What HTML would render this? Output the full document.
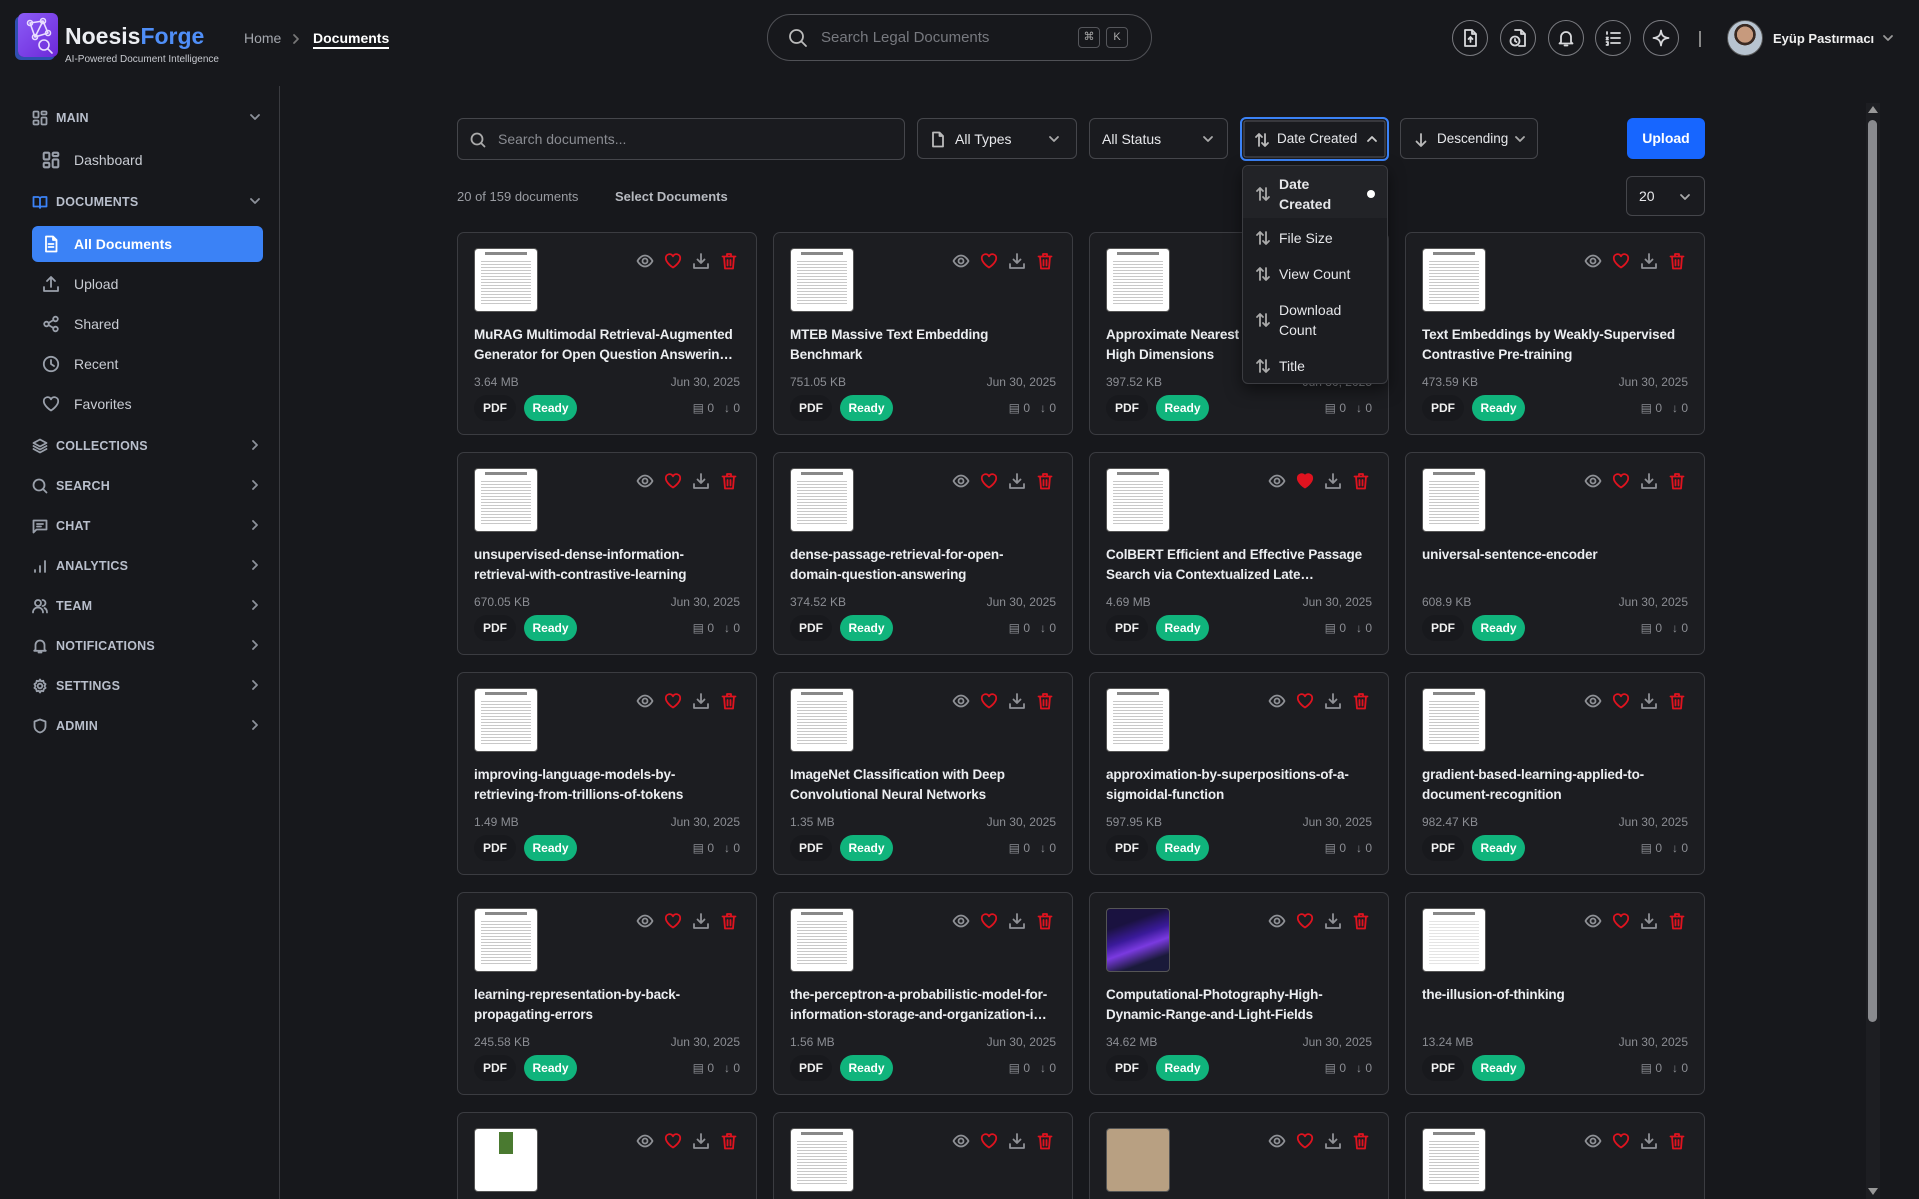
<!DOCTYPE html>
<html><head><meta charset="utf-8">
<style>
*{box-sizing:border-box;margin:0;padding:0}
html,body{width:1919px;height:1199px;overflow:hidden;background:#17181c}
body{font-family:"Liberation Sans",sans-serif;color:#e6e7ea}
#root{position:relative;width:1919px;height:1199px;overflow:hidden}
.a{position:absolute;white-space:nowrap}
svg{display:block}
.ic{fill:none;stroke:currentColor;stroke-width:1.8;stroke-linecap:round;stroke-linejoin:round}
.sec{position:absolute;left:32px;width:232px;height:24px;font-size:12.5px;font-weight:bold;color:#b9bfcc;letter-spacing:.2px;white-space:nowrap}
.sec svg{position:absolute;left:0;top:4px;color:#9aa0ab}
.sec span{position:absolute;left:24px;top:5px}
.sec .ch{position:absolute;left:216px;top:4px;color:#8d919a}
.sub{position:absolute;left:42px;width:200px;height:24px;font-size:14px;color:#c9ccd3;white-space:nowrap}
.sub svg{position:absolute;left:0;top:3px;color:#9aa0ab}
.sub span{position:absolute;left:32px;top:4px}
.card{position:absolute;width:300px;height:203px;background:#1c1d21;border:1px solid #3b3c41;border-radius:7px}
.card.last{height:87px;border-bottom:none;border-radius:7px 7px 0 0}
.th{position:absolute;left:16px;top:15px;width:64px;height:64px;border-radius:4px;border:1px solid #555;background:#fff;overflow:hidden}
.th i{position:absolute;left:6px;right:6px;top:10px;bottom:6px;background:repeating-linear-gradient(#fff 0 2px,#bbb 2px 3px);opacity:.8}
.th b{position:absolute;left:10px;right:10px;top:3px;height:3px;background:#888}
.acts{position:absolute;left:178px;top:19px;width:110px;height:18px}
.acts svg{position:absolute;top:0}
.tt{position:absolute;left:16px;top:92px;width:260px;font-size:13.5px;letter-spacing:-.15px;font-weight:bold;line-height:20px;color:#eceef1;overflow:hidden;display:-webkit-box;-webkit-line-clamp:2;-webkit-box-orient:vertical}
.meta{position:absolute;left:16px;right:16px;top:142px;font-size:12px;color:#8b8d93}
.meta .r{position:absolute;right:0;top:0}
.pdf{position:absolute;left:16px;top:162px;width:42px;height:26px;border-radius:13px;background:#18191d;font-size:12px;font-weight:bold;text-align:center;line-height:26px;color:#f0f0f0}
.rdy{position:absolute;left:66px;top:162px;width:53px;height:26px;border-radius:13px;background:#10b47c;font-size:12px;font-weight:bold;text-align:center;line-height:26px;color:#fff}
.cnt{position:absolute;right:16px;top:168px;font-size:12px;color:#8b8d93;white-space:nowrap}
.box{position:absolute;border:1px solid #45464b;border-radius:6px;background:#1a1b1f;font-size:14px;color:#e8e9ec;white-space:nowrap}
.mi{position:absolute;left:12px;width:125px;font-size:14px;color:#e6e7ea;white-space:nowrap}
.mi svg{position:absolute;left:0;color:#aaa}
.mi span{position:absolute;left:24px;line-height:20px}
.hb{position:absolute;top:20px;width:36px;height:36px;border:1.5px solid #7a7b80;border-radius:50%;color:#d8d9dc}
.hb svg{position:absolute;left:8px;top:8px}
</style></head><body><div id="root">

<div class="a" style="left:18px;top:13px;width:40px;height:44px;border-radius:6px;background:linear-gradient(135deg,#8b5cf6,#6d28d9);box-shadow:-3px 3px 0 #2f4fb0">
<svg width="40" height="44" viewBox="0 0 40 44" class="ic" style="color:#e9ddff;stroke-width:1.6"><circle cx="12" cy="10" r="2.5"/><circle cx="25" cy="8" r="2.5"/><circle cx="30" cy="20" r="2.5"/><circle cx="17" cy="24" r="2.5"/><path d="M12 10 25 8 30 20 17 24 12 10M17 24 25 8"/><circle cx="26" cy="32" r="5"/><path d="M30 36 34 40"/></svg></div>
<div class="a" style="left:65px;top:23px;font-size:23px;font-weight:bold;color:#eceef2">Noesis<span style="color:#4f8ef7">Forge</span></div>
<div class="a" style="left:65px;top:54px;font-size:10px;color:#c8cad0">AI-Powered Document Intelligence</div>
<div class="a" style="left:244px;top:30px;font-size:14px;color:#a3a6ad">Home</div>
<svg class="a ic" style="left:291px;top:33px;color:#777" width="10" height="12" viewBox="0 0 10 12"><path d="M3 2l4 4-4 4"/></svg>
<div class="a" style="left:313px;top:30px;font-size:14px;font-weight:bold;color:#fff;border-bottom:2px solid #fff;padding-bottom:1px">Documents</div>

<div class="a" style="left:767px;top:14px;width:385px;height:47px;border:1.5px solid #505156;border-radius:24px">
<svg class="a ic" style="left:20px;top:13px;color:#bbb" width="20" height="20" viewBox="0 0 20 20"><circle cx="8.5" cy="8.5" r="6.5"/><path d="M13.5 13.5 18 18"/></svg>
<div class="a" style="left:53px;top:14px;font-size:15px;color:#77797f">Search Legal Documents</div>
<div class="a" style="left:310px;top:12px;width:22px;height:21px;border:1px solid #55565b;border-radius:4px;font-size:11px;color:#aaa;text-align:center;line-height:19px">⌘</div>
<div class="a" style="left:338px;top:12px;width:22px;height:21px;border:1px solid #55565b;border-radius:4px;font-size:11px;color:#aaa;text-align:center;line-height:19px">K</div>
</div>

<div class="hb" style="left:1452px"><svg class="ic" width="18" height="18" viewBox="0 0 18 18"><path d="M4 1h7l4 4v12H4zM11 1v4h4M9.5 13V8M7.5 10l2-2 2 2"/></svg></div>
<div class="hb" style="left:1500px"><svg class="ic" width="18" height="18" viewBox="0 0 18 18"><path d="M6 1h6l4 4v12H10M12 1v4h4"/><circle cx="6" cy="12" r="4.5"/><path d="M6 10v2l1.5 1"/></svg></div>
<div class="hb" style="left:1548px"><svg class="ic" width="18" height="18" viewBox="0 0 18 18"><path d="M4 13V8a5 5 0 0 1 10 0v5l1.5 1.5h-13zM7.5 16.5h3"/></svg></div>
<div class="hb" style="left:1595px"><svg class="ic" width="18" height="18" viewBox="0 0 18 18"><path d="M7 4h9M7 9h9M7 14h9M3 3v2M2.5 8.5h1.5l-1.5 2h1.5M2.5 13h1.5v3h-1.5"/></svg></div>
<div class="hb" style="left:1643px"><svg class="ic" width="18" height="18" viewBox="0 0 18 18"><path d="M9 1.5C9.6 6.5 11.5 8.4 16.5 9 11.5 9.6 9.6 11.5 9 16.5 8.4 11.5 6.5 9.6 1.5 9 6.5 8.4 8.4 6.5 9 1.5z"/></svg></div>
<div class="a" style="left:1699px;top:31px;width:2px;height:16px;background:#888"></div>
<div class="a" style="left:1727px;top:20px;width:36px;height:36px;border-radius:50%;background:radial-gradient(circle at 50% 40%,#c79a7d 0 30%,#3a2a22 31% 40%,#b8c4d0 41%);border:1px solid #555"></div>
<div class="a" style="left:1773px;top:31px;font-size:13px;font-weight:bold;color:#f0f0f0">Eyüp Pastırmacı</div>
<svg class="a ic" style="left:1882px;top:33px;color:#999" width="12" height="10" viewBox="0 0 12 10"><path d="M2 3l4 4 4-4"/></svg>

<div class="a" style="left:279px;top:86px;width:1px;height:1113px;background:#3a3b40"></div>
<div class="sec" style="top:106px"><svg class="ic" width="16" height="16" viewBox="0 0 16 16"><rect x="1.5" y="1.5" width="5" height="6" rx="1"/><rect x="9.5" y="1.5" width="5" height="3" rx="1"/><rect x="9.5" y="7.5" width="5" height="7" rx="1"/><rect x="1.5" y="10.5" width="5" height="4" rx="1"/></svg><span>MAIN</span><svg class="ch ic" width="14" height="14" viewBox="0 0 14 14"><path d="M3 5l4 4 4-4"/></svg></div>
<div class="sub" style="top:148px"><svg class="ic" width="18" height="18" viewBox="0 0 16 16"><rect x="1.5" y="1.5" width="5" height="6" rx="1"/><rect x="9.5" y="1.5" width="5" height="3" rx="1"/><rect x="9.5" y="7.5" width="5" height="7" rx="1"/><rect x="1.5" y="10.5" width="5" height="4" rx="1"/></svg><span>Dashboard</span></div>
<div class="sec" style="top:190px"><svg class="ic" width="16" height="16" viewBox="0 0 16 16" style="color:#3b82f6"><path d="M1.5 3h4.5a2 2 0 0 1 2 2v9a1.5 1.5 0 0 0-1.5-1.5h-5zM14.5 3H10a2 2 0 0 0-2 2v9a1.5 1.5 0 0 1 1.5-1.5h5z"/></svg><span>DOCUMENTS</span><svg class="ch ic" width="14" height="14" viewBox="0 0 14 14"><path d="M3 5l4 4 4-4"/></svg></div>
<div class="a" style="left:32px;top:226px;width:231px;height:36px;border-radius:6px;background:#3b82f6"></div>
<div class="sub" style="top:232px;color:#fff;font-weight:bold"><svg class="ic" style="color:#fff" width="18" height="18" viewBox="0 0 18 18"><path d="M4 1.5h7l3.5 3.5v11.5H4zM11 1.5V5h3.5M6.5 9h5M6.5 12h5"/></svg><span>All Documents</span></div>
<div class="sub" style="top:272px"><svg class="ic" width="18" height="18" viewBox="0 0 18 18"><path d="M9 12V2M5 6l4-4 4 4M2 12v4h14v-4"/></svg><span>Upload</span></div>
<div class="sub" style="top:312px"><svg class="ic" width="18" height="18" viewBox="0 0 18 18"><circle cx="13.5" cy="4" r="2.3"/><circle cx="4.5" cy="9" r="2.3"/><circle cx="13.5" cy="14" r="2.3"/><path d="M6.5 8 11.5 5M6.5 10l5 3"/></svg><span>Shared</span></div>
<div class="sub" style="top:352px"><svg class="ic" width="18" height="18" viewBox="0 0 18 18"><circle cx="9" cy="9" r="7.2"/><path d="M9 5v4l3 2"/></svg><span>Recent</span></div>
<div class="sub" style="top:392px"><svg class="ic" width="18" height="18" viewBox="0 0 18 18"><path d="M9 15.5S1.8 11 1.8 6.3A3.8 3.8 0 0 1 9 4.3a3.8 3.8 0 0 1 7.2 2C16.2 11 9 15.5 9 15.5z"/></svg><span>Favorites</span></div>

<div class="sec" style="top:434px"><svg class="ic" width="16" height="16" viewBox="0 0 16 16"><path d="M8 1.5 14.5 5 8 8.5 1.5 5zM1.5 8 8 11.5 14.5 8M1.5 11 8 14.5 14.5 11"/></svg><span>COLLECTIONS</span><svg class="ch ic" width="14" height="14" viewBox="0 0 14 14"><path d="M5 3l4 4-4 4"/></svg></div>
<div class="sec" style="top:474px"><svg class="ic" width="16" height="16" viewBox="0 0 16 16"><circle cx="7" cy="7" r="5.5"/><path d="M11 11l3.5 3.5"/></svg><span>SEARCH</span><svg class="ch ic" width="14" height="14" viewBox="0 0 14 14"><path d="M5 3l4 4-4 4"/></svg></div>
<div class="sec" style="top:514px"><svg class="ic" width="16" height="16" viewBox="0 0 16 16"><path d="M1.5 14.5V2.5h13v9h-10zM5 6h6M5 8.5h4"/></svg><span>CHAT</span><svg class="ch ic" width="14" height="14" viewBox="0 0 14 14"><path d="M5 3l4 4-4 4"/></svg></div>
<div class="sec" style="top:554px"><svg class="ic" width="16" height="16" viewBox="0 0 16 16"><path d="M3 14v-2M8 14V8M13 14V3"/></svg><span>ANALYTICS</span><svg class="ch ic" width="14" height="14" viewBox="0 0 14 14"><path d="M5 3l4 4-4 4"/></svg></div>
<div class="sec" style="top:594px"><svg class="ic" width="16" height="16" viewBox="0 0 16 16"><circle cx="6" cy="5" r="3"/><path d="M1 14.5c0-3 2.2-5 5-5s5 2 5 5M10.5 2a3 3 0 0 1 0 6M12.5 10c1.5.7 2.5 2.3 2.5 4.5"/></svg><span>TEAM</span><svg class="ch ic" width="14" height="14" viewBox="0 0 14 14"><path d="M5 3l4 4-4 4"/></svg></div>
<div class="sec" style="top:634px"><svg class="ic" width="16" height="16" viewBox="0 0 16 16"><path d="M3.5 11.5V7a4.5 4.5 0 0 1 9 0v4.5l1.3 1.3H2.2zM6.5 14.5h3"/></svg><span>NOTIFICATIONS</span><svg class="ch ic" width="14" height="14" viewBox="0 0 14 14"><path d="M5 3l4 4-4 4"/></svg></div>
<div class="sec" style="top:674px"><svg class="ic" width="16" height="16" viewBox="0 0 16 16"><circle cx="8" cy="8" r="2.3"/><path d="M8 1.5l1.2 1.8 2.1-.5.5 2.1 1.8 1.2-1.1 1.9 1.1 1.9-1.8 1.2-.5 2.1-2.1-.5L8 14.5l-1.2-1.8-2.1.5-.5-2.1-1.8-1.2L3.5 8 2.4 6.1l1.8-1.2.5-2.1 2.1.5z"/></svg><span>SETTINGS</span><svg class="ch ic" width="14" height="14" viewBox="0 0 14 14"><path d="M5 3l4 4-4 4"/></svg></div>
<div class="sec" style="top:714px"><svg class="ic" width="16" height="16" viewBox="0 0 16 16"><path d="M8 1.5l5.5 2v4.5c0 3.5-2.5 5.7-5.5 6.5C5 13.7 2.5 11.5 2.5 8V3.5z"/></svg><span>ADMIN</span><svg class="ch ic" width="14" height="14" viewBox="0 0 14 14"><path d="M5 3l4 4-4 4"/></svg></div>

<div class="box" style="left:457px;top:118px;width:448px;height:42px;background:#1a1b1f">
<svg class="a ic" style="left:12px;top:13px;color:#aaa" width="16" height="16" viewBox="0 0 16 16"><circle cx="7" cy="7" r="5.5"/><path d="M11 11l3.5 3.5"/></svg>
<div class="a" style="left:40px;top:12px;color:#8a8c92">Search documents...</div></div>
<div class="box" style="left:917px;top:118px;width:160px;height:41px">
<svg class="a ic" style="left:12px;top:12px;color:#bbb" width="16" height="17" viewBox="0 0 16 17"><path d="M3 1.5h6.5L13 5v10.5H3zM9.5 1.5V5H13"/></svg>
<div class="a" style="left:37px;top:12px">All Types</div>
<svg class="a ic" style="left:130px;top:14px;color:#aaa" width="12" height="12" viewBox="0 0 12 12"><path d="M2 4l4 4 4-4"/></svg></div>
<div class="box" style="left:1089px;top:118px;width:139px;height:41px">
<div class="a" style="left:12px;top:12px">All Status</div>
<svg class="a ic" style="left:112px;top:14px;color:#aaa" width="12" height="12" viewBox="0 0 12 12"><path d="M2 4l4 4 4-4"/></svg></div>
<div class="box" style="left:1240px;top:117px;width:149px;height:44px;border:2px solid #3b82f6;box-shadow:inset 0 0 0 1.5px #1a1b1f,inset 0 0 0 2.5px #55565b">
<svg class="a ic" style="left:12px;top:13px;color:#bbb" width="16" height="16" viewBox="0 0 16 16"><path d="M5 14V2M2 5l3-3 3 3M11 2v12M8 11l3 3 3-3"/></svg>
<div class="a" style="left:35px;top:12px;font-size:13.5px">Date Created</div>
<svg class="a ic" style="left:124px;top:14px;color:#ccc" width="12" height="12" viewBox="0 0 12 12"><path d="M2 8l4-4 4 4"/></svg></div>
<div class="box" style="left:1400px;top:118px;width:138px;height:41px">
<svg class="a ic" style="left:12px;top:13px;color:#bbb" width="16" height="16" viewBox="0 0 16 16"><path d="M8 2v12M3.5 9.5 8 14l4.5-4.5"/></svg>
<div class="a" style="left:36px;top:12px;font-size:13.5px">Descending</div>
<svg class="a ic" style="left:113px;top:14px;color:#aaa" width="12" height="12" viewBox="0 0 12 12"><path d="M2 4l4 4 4-4"/></svg></div>
<div class="a" style="left:1627px;top:118px;width:78px;height:41px;border-radius:6px;background:#1766ff;color:#fff;font-weight:bold;font-size:14px;text-align:center;line-height:41px">Upload</div>

<div class="a" style="left:457px;top:189px;font-size:13px;color:#9a9ca2">20 of 159 documents</div>
<div class="a" style="left:615px;top:189px;font-size:13px;font-weight:bold;color:#b7bac0">Select Documents</div>
<div class="box" style="left:1626px;top:176px;width:79px;height:40px">
<div class="a" style="left:12px;top:11px">20</div>
<svg class="a ic" style="left:52px;top:14px;color:#aaa" width="12" height="12" viewBox="0 0 12 12"><path d="M2 4l4 4 4-4"/></svg></div>

<div class="a" style="left:1866px;top:103px;width:14px;height:1096px;background:#1d1e22"></div>
<div class="a" style="left:1868px;top:120px;width:9px;height:902px;border-radius:5px;background:#8a8b8f"></div>
<div class="a" style="left:1868px;top:106px;width:0;height:0;border-left:5px solid transparent;border-right:5px solid transparent;border-bottom:7px solid #999"></div>
<div class="a" style="left:1868px;top:1188px;width:0;height:0;border-left:5px solid transparent;border-right:5px solid transparent;border-top:7px solid #999"></div>

<div class="card" style="left:457px;top:232px"><div class="th"><b></b><i></i></div><div class="acts"></div><div class="tt">MuRAG Multimodal Retrieval-Augmented Generator for Open Question Answering over Images and Text</div><div class="meta">3.64 MB<span class="r">Jun 30, 2025</span></div><div class="pdf">PDF</div><div class="rdy">Ready</div><div class="cnt">▤ 0 &nbsp; ↓ 0</div></div>
<div class="card" style="left:773px;top:232px"><div class="th"><b></b><i></i></div><div class="acts"></div><div class="tt">MTEB Massive Text Embedding Benchmark</div><div class="meta">751.05 KB<span class="r">Jun 30, 2025</span></div><div class="pdf">PDF</div><div class="rdy">Ready</div><div class="cnt">▤ 0 &nbsp; ↓ 0</div></div>
<div class="card" style="left:1089px;top:232px"><div class="th"><b></b><i></i></div><div class="acts"></div><div class="tt">Approximate Nearest Neighbor Search in High Dimensions</div><div class="meta">397.52 KB<span class="r">Jun 30, 2025</span></div><div class="pdf">PDF</div><div class="rdy">Ready</div><div class="cnt">▤ 0 &nbsp; ↓ 0</div></div>
<div class="card" style="left:1405px;top:232px"><div class="th"><b></b><i></i></div><div class="acts"></div><div class="tt">Text Embeddings by Weakly-Supervised Contrastive Pre-training</div><div class="meta">473.59 KB<span class="r">Jun 30, 2025</span></div><div class="pdf">PDF</div><div class="rdy">Ready</div><div class="cnt">▤ 0 &nbsp; ↓ 0</div></div>

<div class="card" style="left:457px;top:452px"><div class="th"><b></b><i></i></div><div class="acts"></div><div class="tt">unsupervised-dense-information-retrieval-with-contrastive-learning</div><div class="meta">670.05 KB<span class="r">Jun 30, 2025</span></div><div class="pdf">PDF</div><div class="rdy">Ready</div><div class="cnt">▤ 0 &nbsp; ↓ 0</div></div>
<div class="card" style="left:773px;top:452px"><div class="th"><b></b><i></i></div><div class="acts"></div><div class="tt">dense-passage-retrieval-for-open-domain-question-answering</div><div class="meta">374.52 KB<span class="r">Jun 30, 2025</span></div><div class="pdf">PDF</div><div class="rdy">Ready</div><div class="cnt">▤ 0 &nbsp; ↓ 0</div></div>
<div class="card" style="left:1089px;top:452px"><div class="th"><b></b><i></i></div><div class="acts fav"></div><div class="tt">ColBERT Efficient and Effective Passage Search via Contextualized Late Interaction over BERT</div><div class="meta">4.69 MB<span class="r">Jun 30, 2025</span></div><div class="pdf">PDF</div><div class="rdy">Ready</div><div class="cnt">▤ 0 &nbsp; ↓ 0</div></div>
<div class="card" style="left:1405px;top:452px"><div class="th"><b></b><i></i></div><div class="acts"></div><div class="tt">universal-sentence-encoder</div><div class="meta">608.9 KB<span class="r">Jun 30, 2025</span></div><div class="pdf">PDF</div><div class="rdy">Ready</div><div class="cnt">▤ 0 &nbsp; ↓ 0</div></div>

<div class="card" style="left:457px;top:672px"><div class="th"><b></b><i></i></div><div class="acts"></div><div class="tt">improving-language-models-by-retrieving-from-trillions-of-tokens</div><div class="meta">1.49 MB<span class="r">Jun 30, 2025</span></div><div class="pdf">PDF</div><div class="rdy">Ready</div><div class="cnt">▤ 0 &nbsp; ↓ 0</div></div>
<div class="card" style="left:773px;top:672px"><div class="th"><b></b><i></i></div><div class="acts"></div><div class="tt">ImageNet Classification with Deep Convolutional Neural Networks</div><div class="meta">1.35 MB<span class="r">Jun 30, 2025</span></div><div class="pdf">PDF</div><div class="rdy">Ready</div><div class="cnt">▤ 0 &nbsp; ↓ 0</div></div>
<div class="card" style="left:1089px;top:672px"><div class="th"><b></b><i></i></div><div class="acts"></div><div class="tt">approximation-by-superpositions-of-a-sigmoidal-function</div><div class="meta">597.95 KB<span class="r">Jun 30, 2025</span></div><div class="pdf">PDF</div><div class="rdy">Ready</div><div class="cnt">▤ 0 &nbsp; ↓ 0</div></div>
<div class="card" style="left:1405px;top:672px"><div class="th"><b></b><i></i></div><div class="acts"></div><div class="tt">gradient-based-learning-applied-to-document-recognition</div><div class="meta">982.47 KB<span class="r">Jun 30, 2025</span></div><div class="pdf">PDF</div><div class="rdy">Ready</div><div class="cnt">▤ 0 &nbsp; ↓ 0</div></div>

<div class="card" style="left:457px;top:892px"><div class="th"><b></b><i></i></div><div class="acts"></div><div class="tt">learning-representation-by-back-propagating-errors</div><div class="meta">245.58 KB<span class="r">Jun 30, 2025</span></div><div class="pdf">PDF</div><div class="rdy">Ready</div><div class="cnt">▤ 0 &nbsp; ↓ 0</div></div>
<div class="card" style="left:773px;top:892px"><div class="th"><b></b><i></i></div><div class="acts"></div><div class="tt">the-perceptron-a-probabilistic-model-for-information-storage-and-organization-in-the-brain</div><div class="meta">1.56 MB<span class="r">Jun 30, 2025</span></div><div class="pdf">PDF</div><div class="rdy">Ready</div><div class="cnt">▤ 0 &nbsp; ↓ 0</div></div>
<div class="card" style="left:1089px;top:892px"><div class="th" style="background:linear-gradient(160deg,#1a1240 0 25%,#3a1a9a 45%,#7a3ae0 60%,#1a1a3a 80%)"></div><div class="acts"></div><div class="tt">Computational-Photography-High-Dynamic-Range-and-Light-Fields</div><div class="meta">34.62 MB<span class="r">Jun 30, 2025</span></div><div class="pdf">PDF</div><div class="rdy">Ready</div><div class="cnt">▤ 0 &nbsp; ↓ 0</div></div>
<div class="card" style="left:1405px;top:892px"><div class="th"><b></b><i style="opacity:.4"></i></div><div class="acts"></div><div class="tt">the-illusion-of-thinking</div><div class="meta">13.24 MB<span class="r">Jun 30, 2025</span></div><div class="pdf">PDF</div><div class="rdy">Ready</div><div class="cnt">▤ 0 &nbsp; ↓ 0</div></div>

<div class="card last" style="left:457px;top:1112px"><div class="th"><b style="background:#4a7a30;left:24px;right:24px;height:22px"></b></div><div class="acts"></div></div>
<div class="card last" style="left:773px;top:1112px"><div class="th"><b></b><i></i></div><div class="acts"></div></div>
<div class="card last" style="left:1089px;top:1112px"><div class="th" style="background:#b8a082"></div><div class="acts"></div></div>
<div class="card last" style="left:1405px;top:1112px"><div class="th"><b></b><i></i></div><div class="acts"></div></div>

<div class="a" style="left:1242px;top:165px;width:146px;height:219px;background:#1c1d21;border:1px solid #3b3c41;border-radius:6px;box-shadow:0 6px 16px rgba(0,0,0,.5)">
<div class="a" style="left:0;top:0;width:144px;height:52px;background:#222327;border-radius:6px 6px 0 0"></div>
<div class="mi" style="top:8px;height:40px;font-weight:bold"><svg class="ic" style="top:12px" width="16" height="16" viewBox="0 0 16 16"><path d="M5 14V2M2 5l3-3 3 3M11 2v12M8 11l3 3 3-3"/></svg><span style="top:0">Date<br>Created</span><div class="a" style="left:112px;top:16px;width:8px;height:8px;border-radius:50%;background:#fff"></div></div>
<div class="mi" style="top:62px"><svg class="ic" style="top:2px" width="16" height="16" viewBox="0 0 16 16"><path d="M5 14V2M2 5l3-3 3 3M11 2v12M8 11l3 3 3-3"/></svg><span>File Size</span></div>
<div class="mi" style="top:98px"><svg class="ic" style="top:2px" width="16" height="16" viewBox="0 0 16 16"><path d="M5 14V2M2 5l3-3 3 3M11 2v12M8 11l3 3 3-3"/></svg><span>View Count</span></div>
<div class="mi" style="top:134px"><svg class="ic" style="top:12px" width="16" height="16" viewBox="0 0 16 16"><path d="M5 14V2M2 5l3-3 3 3M11 2v12M8 11l3 3 3-3"/></svg><span>Download<br>Count</span></div>
<div class="mi" style="top:190px"><svg class="ic" style="top:2px" width="16" height="16" viewBox="0 0 16 16"><path d="M5 14V2M2 5l3-3 3 3M11 2v12M8 11l3 3 3-3"/></svg><span>Title</span></div>
</div>

</div>
<script>
var ic='<svg class="ic" style="left:0;color:#8f9196" width="18" height="18" viewBox="0 0 18 18"><path d="M1.5 9S4.3 3.5 9 3.5 16.5 9 16.5 9 13.7 14.5 9 14.5 1.5 9 1.5 9z"/><circle cx="9" cy="9" r="2.5"/></svg>'+
'<svg class="ic HEART" style="left:28px;color:#e0131f" width="18" height="18" viewBox="0 0 18 18"><path d="M9 15.5S1.8 11 1.8 6.3A3.8 3.8 0 0 1 9 4.3a3.8 3.8 0 0 1 7.2 2C16.2 11 9 15.5 9 15.5z"/></svg>'+
'<svg class="ic" style="left:56px;color:#8f9196" width="18" height="18" viewBox="0 0 18 18"><path d="M9 2v9M5.5 7.5 9 11l3.5-3.5M2 12v4h14v-4"/></svg>'+
'<svg class="ic" style="left:84px;color:#e0131f" width="18" height="18" viewBox="0 0 18 18"><path d="M2.5 4.5h13M7 4.5V2h4v2.5M4 4.5l1 12h8l1-12M7.5 8v5.5M10.5 8v5.5"/></svg>';
document.querySelectorAll('.acts').forEach(function(a){a.innerHTML=ic;if(a.classList.contains('fav'))a.querySelector('.HEART path').style.fill='#e0131f';});
</script>
</body></html>
